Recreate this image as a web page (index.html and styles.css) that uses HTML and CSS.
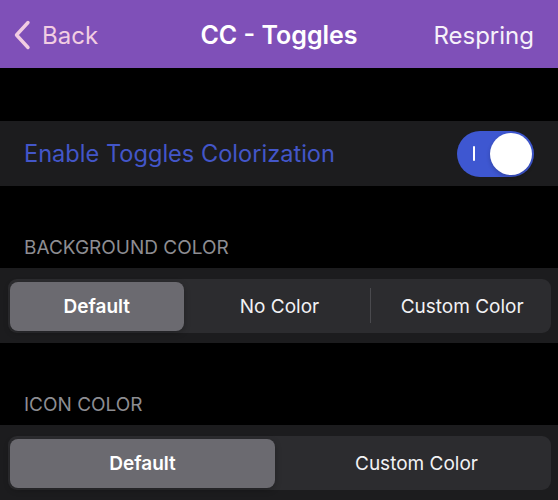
FILE: index.html
```html
<!DOCTYPE html>
<html lang="en">
<head>
<meta charset="utf-8">
<title>CC - Toggles</title>
<link rel="stylesheet" href="styles.css">
</head>
<body>
<header class="navbar">
  <a class="back" href="#">
    <svg class="chevron" width="18" height="30" viewBox="0 0 18 30" aria-hidden="true">
      <path d="M15 2.5 L3.5 15 L15 27.5" fill="none" stroke="currentColor" stroke-width="3.4" stroke-linecap="round" stroke-linejoin="round"/>
    </svg>
    <span>Back</span>
  </a>
  <h1 class="title">CC - Toggles</h1>
  <span class="respring">Respring</span>
</header>

<main class="content">
  <div class="row toggle-row">
    <span class="row-label">Enable Toggles Colorization</span>
    <span class="switch on" role="switch" aria-checked="true">
      <span class="switch-mark"></span>
      <span class="switch-knob"></span>
    </span>
  </div>

  <div class="section-label">BACKGROUND COLOR</div>
  <div class="group">
    <div class="segmented three">
      <span class="segment selected">Default</span>
      <span class="segment">No Color</span>
      <span class="segment divided">Custom Color</span>
    </div>
  </div>

  <div class="section-label">ICON COLOR</div>
  <div class="group">
    <div class="segmented two">
      <span class="segment selected">Default</span>
      <span class="segment">Custom Color</span>
    </div>
  </div>
</main>
</body>
</html>
```

FILE: styles.css
```css
* { box-sizing: border-box; }

html, body {
  margin: 0;
  padding: 0;
  background: #000;
  font-family: Inter, "Noto Sans", "Liberation Sans", sans-serif;
  color: #fff;
}

.navbar {
  height: 68px;
  background: #7f50b8;
  display: grid;
  grid-template-columns: 1fr auto 1fr;
  align-items: center;
  padding: 2px 24px 0 24px;
}

.back {
  display: flex;
  align-items: center;
  gap: 11px;
  margin-left: -11px;
  color: #f2cde2;
  text-decoration: none;
  font-size: 24px;
  justify-self: start;
}

.chevron { display: block; }

.title {
  margin: 0;
  font-size: 25px;
  font-weight: 600;
  color: #fff;
}

.respring {
  justify-self: end;
  font-size: 24px;
  color: #f6f1fa;
}

.content {
  padding-top: 53px;
}

.row {
  height: 65px;
  background: #1c1c1e;
  display: flex;
  align-items: center;
  justify-content: space-between;
  padding: 0 24px;
}

.row-label {
  font-size: 23.6px;
  color: #4356c9;
}

.switch {
  display: flex;
  align-items: center;
  gap: 15px;
  height: 46px;
  padding: 2px 2px 2px 16px;
  border-radius: 23px;
  background: #3e57d1;
}

.switch-mark {
  width: 2px;
  height: 15px;
  background: #fff;
  border-radius: 1px;
}

.switch-knob {
  width: 42px;
  height: 42px;
  border-radius: 50%;
  background: #fff;
  box-shadow: 0 2px 4px rgba(0, 0, 0, 0.2);
}

.section-label {
  margin: 51px 0 9px;
  padding-left: 24px;
  font-size: 19px;
  line-height: 22px;
  color: #8d8d92;
}

.group {
  background: #1c1c1e;
  padding: 11px 7px 10px 8px;
}

.segmented {
  display: grid;
  column-gap: 9px;
  height: 54px;
  padding: 3px 2px 2px;
  border-radius: 9px;
  background: #2c2c2f;
}

.segmented.three { grid-template-columns: repeat(3, 1fr); }
.segmented.two { grid-template-columns: repeat(2, 1fr); }

.segment {
  position: relative;
  display: flex;
  align-items: center;
  justify-content: center;
  font-size: 19px;
  color: #f2f2f4;
  border-radius: 8px;
}

.segment.selected {
  background: #6b6a70;
  font-weight: 600;
  color: #fff;
  box-shadow: 0 2px 6px rgba(0, 0, 0, 0.25);
}

.segment.divided::before {
  content: "";
  position: absolute;
  left: -5px;
  top: 6px;
  bottom: 8px;
  width: 1px;
  background: #4a4a4e;
}
```
